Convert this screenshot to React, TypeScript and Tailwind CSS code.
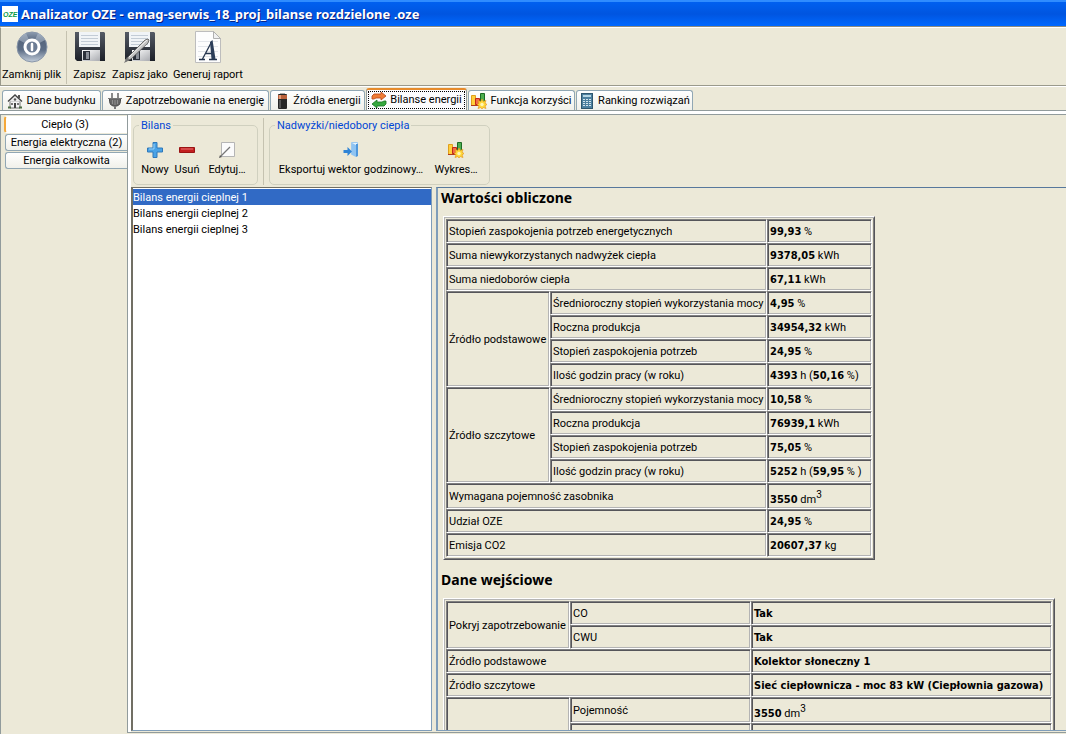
import React from 'react';
import clsx from 'clsx';

const CloseIcon = () => (
  <svg width="32" height="32" viewBox="0 0 32 32">
    <defs>
      <linearGradient id="disc" x1="0" y1="0" x2="0" y2="1">
        <stop offset="0" stopColor="#8d9cb0" />
        <stop offset=".3" stopColor="#56667e" />
        <stop offset=".6" stopColor="#5d6e86" />
        <stop offset="1" stopColor="#c3cedb" />
      </linearGradient>
    </defs>
    <circle cx="16" cy="16" r="15" fill="url(#disc)" stroke="#8896a9" />
    <path d="M16 16L3 9a15 15 0 0 1 7-7zM16 16l13-7a15 15 0 0 0-7-7z" fill="#b9c5d4" opacity=".5" />
    <circle cx="16" cy="16" r="7" fill="#6c7c94" stroke="#fff" strokeWidth="3" />
    <path d="M16 13v6" stroke="#fff" strokeWidth="2.500" strokeLinecap="round" />
  </svg>
);

const Floppy = ({ pen = false }: { pen?: boolean }) => (
  <svg width="32" height="32" viewBox="0 0 32 32">
    <defs>
      <linearGradient id="floppy" x1="0" y1="0" x2="0" y2="1">
        <stop offset="0" stopColor="#555b66" />
        <stop offset="1" stopColor="#1b1f27" />
      </linearGradient>
      <linearGradient id="shutter" x1="0" y1="0" x2="1" y2="1">
        <stop offset="0" stopColor="#fff" />
        <stop offset="1" stopColor="#a9abb0" />
      </linearGradient>
    </defs>
    <path d="M1 1h29l1 1v28H3l-2-2z" fill="url(#floppy)" />
    <path d="M5 1h21v15H5z" fill="#f1f4f7" />
    <path d="M7 4.500h17M7 7.500h17M7 10.500h17M7 13.500h17" stroke="#c3ccd6" />
    <path d="M8 19h18v11H8z" fill="url(#shutter)" />
    <path d="M9 20h7v9H9z" fill="#2b303a" />
    <path d="M12 21h3v7h-3z" fill="#8a8f98" />
    {pen && (
      <g>
        <path d="M2 30l2-4L21 9l3-1 1 1-1 3L7 28z" fill="#c4c4c4" stroke="#555" strokeWidth=".8" />
        <path d="M5 26L23 9" stroke="#f2f2f2" />
        <path d="M0 32l3-6 3 3z" fill="#777" />
      </g>
    )}
  </svg>
);

const ReportIcon = () => (
  <svg width="32" height="32" viewBox="0 0 32 32">
    <path d="M3.500.5h18l7 7v24h-25z" fill="#fdfdfd" stroke="#bdbdbd" />
    <path d="M21.500.5v7h7z" fill="#f0f0f0" stroke="#b0b0b0" />
    <path d="M6 10.500h20M6 15.500h20M6 20.500h20M6 25.500h20" stroke="#e3e6ea" />
    <path d="M7 28.500h6M17 28.500h8M10.500 28l9-17M13.500 22.500h8" stroke="#26364f" strokeWidth="1.300" fill="none" />
    <path d="M18 11l2.500-2 3 19h-4z" fill="#2c3e59" />
  </svg>
);

const HouseIcon = () => (
  <svg width="16" height="16" viewBox="0 0 16 16">
    <path d="M3 8h10v7H3z" fill="#f4f4f4" stroke="#555" strokeWidth=".8" />
    <path d="M1 8.500L8 2l7 6.500" fill="#eee" stroke="#444" strokeWidth="1.400" />
    <path d="M11 2h2v3h-2z" fill="#555" />
    <path d="M7 10h2v5H7z" fill="#444" />
    <circle cx="8" cy="6.500" r="1.200" fill="#555" />
    <path d="M4 10h2v2H4zM10 10h2v2h-2z" fill="#777" />
    <path d="M1 13.500h3v2H1zM12 13.500h3v2h-3z" fill="#4b6b43" />
  </svg>
);

const PlugIcon = () => (
  <svg width="16" height="16" viewBox="0 0 16 16">
    <path d="M4 0h2v6H4zM10 0h2v6h-2z" fill="#8a8a8a" />
    <path d="M2.500 5.500h11v3l-1 3-2.500 1.500H6L3.500 11.500l-1-3z" fill="#666" stroke="#4a4a4a" />
    <path d="M1 5.500h14" stroke="#777" />
    <path d="M5.500 7v4M8 7v5M10.500 7v4" stroke="#909090" />
    <path d="M7 13h2v3H7z" fill="#777" />
  </svg>
);

const BatteryIcon = () => (
  <svg width="16" height="16" viewBox="0 0 16 16">
    <path d="M6 0h5v2H6z" fill="#aaa" />
    <rect x="4" y="1" width="9" height="15" rx="1" fill="#262626" />
    <path d="M4 2h9v4H4z" fill="#b9603a" />
    <path d="M6 2v4" stroke="#f0b090" strokeWidth="1.500" />
    <path d="M6 7v8" stroke="#666" strokeWidth="1.500" />
  </svg>
);

const BalanceIcon = () => (
  <svg width="16" height="16" viewBox="0 0 16 16">
    <path d="M1 7V4l2-2h7V0l5 4-5 4V6H5L3 7z" fill="#ef7b35" stroke="#b64415" strokeWidth=".8" />
    <path d="M15 9v3l-2 2H6v2l-5-4 5-4v2h5l2-1z" fill="#35a83f" stroke="#167321" strokeWidth=".8" />
  </svg>
);

const ChartIcon = () => (
  <svg width="16" height="16" viewBox="0 0 16 16">
    <path d="M.5 2.500h4v10h-4z" fill="#ffcf3c" stroke="#e0a01c" />
    <path d="M4.500 5.500h4v6h-4z" fill="#f06a4a" stroke="#c02818" />
    <path d="M9.500.5h4v10h-4z" fill="#4cae50" stroke="#1c6a24" />
    <path d="M0 12.500h8" stroke="#b33a1a" />
    <path d="M11 6l1.200 2.500L15 7.500l-1 2.700 2 1.300-2 1.300 1 2.700-2.800-1L11 16l-1.200-1.500-2.800 1 1-2.700-2-1.300 2-1.300-1-2.700 2.800 1z" fill="#ffd83a" stroke="#e59a1c" strokeWidth=".7" />
    <circle cx="11" cy="11.500" r="1.700" fill="#fff6b8" />
  </svg>
);

const CalculatorIcon = () => (
  <svg width="16" height="16" viewBox="0 0 16 16">
    <rect x="2.500" y=".5" width="11" height="15" fill="#4c7f9f" stroke="#2e566f" />
    <path d="M4 2h8v2H4z" fill="#b5d5e2" />
    <path d="M4 6.500h8M4 8.500h8M4 10.500h8M4 12.500h8" stroke="#d3e4ec" strokeDasharray="2 1" />
  </svg>
);

const PlusIcon = () => (
  <svg width="16" height="16" viewBox="0 0 16 16">
    <path d="M6 .5h4V6h5.500v4H10v5.500H6V10H.5V6H6z" fill="#4aa3e6" stroke="#2f78ba" />
    <path d="M7 2v5H2" stroke="#9ad2f8" fill="none" />
  </svg>
);

const MinusIcon = () => (
  <svg width="16" height="16" viewBox="0 0 16 16">
    <path d="M.5 5.500h15v5H.5z" fill="#c31f1f" stroke="#9a1414" />
    <path d="M2 7h12" stroke="#e87575" />
  </svg>
);

const EditIcon = () => (
  <svg width="16" height="16" viewBox="0 0 16 16">
    <path d="M2.500.5h13v14h-13z" fill="#fbfbfb" stroke="#b5b5b5" />
    <path d="M2 14L11 5" stroke="#777" strokeWidth="1.200" />
    <path d="M0 16l3-1-2-2z" fill="#555" />
  </svg>
);

const ExportIcon = () => (
  <svg width="16" height="16" viewBox="0 0 16 16">
    <path d="M8.500.5h6v12h-6z" fill="#e6f3fd" stroke="#9cc8ee" />
    <path d="M9 1l4 2v12l-4-2z" fill="#8fc4f2" />
    <path d="M13 2h2v12l-2 1z" fill="#4e97dc" />
    <path d="M.5 8h4V5L9 9.500 4.500 14v-3h-4z" fill="#2f84d6" />
  </svg>
);

const mainTabs = [
  { label: 'Dane budynku', icon: <HouseIcon />, width: 'w-[99px]' },
  { label: 'Zapotrzebowanie na energię', icon: <PlugIcon />, width: 'w-[167px]' },
  { label: 'Źródła energii', icon: <BatteryIcon />, width: 'w-[95px]' },
  { label: 'Bilanse energii', icon: <BalanceIcon />, width: 'w-[101px]', active: true },
  { label: 'Funkcja korzyści', icon: <ChartIcon />, width: 'w-[107px]' },
  { label: 'Ranking rozwiązań', icon: <CalculatorIcon />, width: 'w-[117px]' },
];

const sideTabs = ['Ciepło (3)', 'Energia elektryczna (2)', 'Energia całkowita'];
const balances = ['Bilans energii cieplnej 1', 'Bilans energii cieplnej 2', 'Bilans energii cieplnej 3'];

const Strong = ({ children }: { children: React.ReactNode }) => (
  <b className="font-['DejaVu_Sans_Condensed','DejaVu_Sans',sans-serif]">{children}</b>
);

const sourceRows = [
  {
    name: 'Źródło podstawowe',
    rows: [
      ['Średnioroczny stopień wykorzystania mocy', <><Strong>4,95</Strong> %</>],
      ['Roczna produkcja', <><Strong>34954,32</Strong> kWh</>],
      ['Stopień zaspokojenia potrzeb', <><Strong>24,95</Strong> %</>],
      ['Ilość godzin pracy (w roku)', <><Strong>4393</Strong> h (<Strong>50,16</Strong> %)</>],
    ],
  },
  {
    name: 'Źródło szczytowe',
    rows: [
      ['Średnioroczny stopień wykorzystania mocy', <><Strong>10,58</Strong> %</>],
      ['Roczna produkcja', <><Strong>76939,1</Strong> kWh</>],
      ['Stopień zaspokojenia potrzeb', <><Strong>75,05</Strong> %</>],
      ['Ilość godzin pracy (w roku)', <><Strong>5252</Strong> h (<Strong>59,95</Strong> % )</>],
    ],
  },
];

function ToolButton({ icon, label, width }: { icon: React.ReactNode; label: string; width: string }) {
  return (
    <button className={clsx('flex flex-col items-center gap-[5px] whitespace-nowrap', width)}>
      {icon}
      <span>{label}</span>
    </button>
  );
}

function Cell({ children, tall, ...rest }: { children?: React.ReactNode; tall?: boolean; colSpan?: number; rowSpan?: number }) {
  return (
    <td
      {...rest}
      className={clsx(
        'border border-t-[#808080] border-l-[#808080] border-r-white border-b-white px-[2px] pt-[2px] whitespace-nowrap shadow-[inset_1px_1px_#55555a,inset_-1px_-1px_#b4b4b4]',
        tall ? 'h-[26px]' : 'h-6'
      )}
    >
      {children}
    </td>
  );
}

function DataTable({ cols, children }: { cols: string[]; children: React.ReactNode }) {
  return (
    <table className="ml-[2px] border-separate border-spacing-0 border border-t-white border-l-white border-r-[#55555a] border-b-[#55555a] p-[2px] shadow-[inset_1px_1px_#b4b4b4,inset_-1px_-1px_#808080]">
      <colgroup>
        {cols.map((c, i) => (
          <col key={i} className={c} />
        ))}
      </colgroup>
      <tbody>{children}</tbody>
    </table>
  );
}

const Cubic = () => (
  <>
    <Strong>3550</Strong> dm<sup className="top-0 align-super text-[10px] leading-[14px]">3</sup>
  </>
);

export default function App() {
  return (
    <div className="flex h-screen flex-col overflow-hidden bg-[#ece9d8] font-['Roboto','DejaVu_Sans_Condensed',sans-serif] text-[11px] leading-[14px] text-black">
      <header className="flex h-[27px] shrink-0 items-center gap-[3px] border-t-2 border-b border-t-[#2f8cff] border-b-[#8c8c80] bg-linear-to-b from-[#0060f0] via-[#0055e0] to-[#0068ff] pl-[2px]">
        <svg width="16" height="16" viewBox="0 0 16 16">
          <path d="M0 0h16v16H0z" fill="#fff" />
          <text x="1" y="11" fontSize="7" fontWeight="bold" fontStyle="italic" fill="#0a9a4a" fontFamily="Liberation Sans">OZE</text>
        </svg>
        <h1 className="font-['Noto_Sans',sans-serif] text-[13px] font-bold whitespace-nowrap text-white [text-shadow:1px_1px_#0a1f80]">
          Analizator OZE - emag-serwis_18_proj_bilanse rozdzielone .oze
        </h1>
      </header>

      <div className="flex h-[59px] shrink-0 border border-t-white border-r-0 border-b-[#9a9a8c] border-l-[#9a9a8c] px-[2px] pt-[3px]">
        <ToolButton icon={<CloseIcon />} label="Zamknij plik" width="w-[57px]" />
        <div className="ml-[6px] h-[53px] w-px bg-[#c5c2b0]" />
        <ToolButton icon={<Floppy />} label="Zapisz" width="w-[45px]" />
        <ToolButton icon={<Floppy pen />} label="Zapisz jako" width="w-[56px]" />
        <ToolButton icon={<ReportIcon />} label="Generuj raport" width="w-[80px]" />
      </div>

      <nav className="flex h-6 shrink-0 items-end gap-px border-t border-white pl-[2px]">
        {mainTabs.map((t) => (
          <button
            key={t.label}
            className={clsx(
              'flex items-center justify-center gap-[3px] rounded-t-[3px] border border-b-0 whitespace-nowrap',
              t.width,
              t.active
                ? 'h-[22px] border-[#919b9c] border-t-2 border-t-[#e68b2c] bg-[#fcfcfe] px-px pb-px'
                : 'h-5 border-[#91a7b4] bg-linear-to-b from-white to-[#f0f0ea] pt-px'
            )}
          >
            {t.active ? (
              <span className="flex h-[18px] flex-1 items-center justify-center gap-[3px] border border-dotted border-black">
                {t.icon}
                {t.label}
              </span>
            ) : (
              <>
                {t.icon}
                {t.label}
              </>
            )}
          </button>
        ))}
      </nav>

      <div className="h-[5px] shrink-0 border-y border-[#919b9c] bg-white" />

      <main className="flex min-h-0 flex-1 border-l border-[#919b9c]">
        <nav className="flex w-[126px] shrink-0 flex-col gap-px pl-[3px]">
          {sideTabs.map((t, i) => (
            <button
              key={t}
              className={clsx(
                'h-[17px] rounded-l-[3px] border pt-px leading-[14px] whitespace-nowrap',
                i === 0 ? 'mt-px border-white border-l-2 border-l-[#f5a83a] bg-white pr-[2px]' : 'ml-px border-r-0 border-[#91a7b4] bg-linear-to-b from-white to-[#f0f0ea]'
              )}
            >
              {t}
            </button>
          ))}
        </nav>

        <section className="mb-px flex min-w-0 flex-1 flex-col border-b border-l border-[#919b9c]">
          <div className="flex h-[72px] shrink-0 border-l-3 border-white pt-[3px] pl-[2px]">
            <fieldset className="flex h-[67px] w-[125px] rounded-[5px] border border-[#d0d0bf] pt-[9px] pl-1">
              <legend className="ml-px px-[2px] pt-px text-[#0046d5]">Bilans</legend>
              <ToolButton icon={<PlusIcon />} label="Nowy" width="w-[34px]" />
              <ToolButton icon={<MinusIcon />} label="Usuń" width="w-[30px]" />
              <ToolButton icon={<EditIcon />} label="Edytuj…" width="w-[50px]" />
            </fieldset>
            <div className="mx-[5px] h-[67px] w-px bg-[#c5c2b0]" />
            <fieldset className="flex h-[67px] w-[221px] rounded-[5px] border border-[#d0d0bf] pt-[9px] pl-1">
              <legend className="ml-px px-[2px] pt-px text-[#0046d5]">Nadwyżki/niedobory ciepła</legend>
              <ToolButton icon={<ExportIcon />} label="Eksportuj wektor godzinowy…" width="w-[154px]" />
              <ToolButton icon={<ChartIcon />} label="Wykres…" width="w-[56px]" />
            </fieldset>
          </div>

          <div className="flex min-h-0 flex-1 border-l-3 border-white pb-px">
            <ul className="w-[301px] shrink-0 border border-l-2 border-[#7f9db9] border-t-[#716f64] border-l-[#716f64] bg-white pt-px">
              {balances.map((b, i) => (
                <li key={b} className={clsx('h-4 pt-[2px]', i === 0 && 'bg-[#316ac5] text-white')}>
                  {b}
                </li>
              ))}
            </ul>
            <article className="ml-1 min-w-0 flex-1 overflow-hidden border border-r-0 border-l-2 border-[#7f9db9] border-t-[#57789c] pl-[3px]">
              <h2 className="mt-px mb-[10px] font-['Noto_Sans',sans-serif] text-[14px] leading-[17px] font-bold">Wartości obliczone</h2>
              <DataTable cols={['w-[104px]', 'w-[217px]', 'w-[105px]']}>
                <tr>
                  <Cell colSpan={2}>Stopień zaspokojenia potrzeb energetycznych</Cell>
                  <Cell><Strong>99,93</Strong> %</Cell>
                </tr>
                <tr>
                  <Cell colSpan={2}>Suma niewykorzystanych nadwyżek ciepła</Cell>
                  <Cell><Strong>9378,05</Strong> kWh</Cell>
                </tr>
                <tr>
                  <Cell colSpan={2}>Suma niedoborów ciepła</Cell>
                  <Cell><Strong>67,11</Strong> kWh</Cell>
                </tr>
                {sourceRows.map((s) =>
                  s.rows.map(([label, value], i) => (
                    <tr key={`${s.name}-${i}`}>
                      {i === 0 && <Cell rowSpan={4}>{s.name}</Cell>}
                      <Cell>{label}</Cell>
                      <Cell>{value}</Cell>
                    </tr>
                  ))
                )}
                <tr>
                  <Cell tall colSpan={2}>Wymagana pojemność zasobnika</Cell>
                  <Cell tall><Cubic /></Cell>
                </tr>
                <tr>
                  <Cell colSpan={2}>Udział OZE</Cell>
                  <Cell><Strong>24,95</Strong> %</Cell>
                </tr>
                <tr>
                  <Cell colSpan={2}>Emisja CO2</Cell>
                  <Cell><Strong>20607,37</Strong> kg</Cell>
                </tr>
              </DataTable>

              <h2 className="mt-[11px] mb-[10px] font-['Noto_Sans',sans-serif] text-[14px] leading-[17px] font-bold">Dane wejściowe</h2>
              <DataTable cols={['w-[124px]', 'w-[181px]', 'w-[301px]']}>
                <tr>
                  <Cell rowSpan={2}>Pokryj zapotrzebowanie</Cell>
                  <Cell>CO</Cell>
                  <Cell><Strong>Tak</Strong></Cell>
                </tr>
                <tr>
                  <Cell>CWU</Cell>
                  <Cell><Strong>Tak</Strong></Cell>
                </tr>
                <tr>
                  <Cell colSpan={2}>Źródło podstawowe</Cell>
                  <Cell><Strong>Kolektor słoneczny 1</Strong></Cell>
                </tr>
                <tr>
                  <Cell colSpan={2}>Źródło szczytowe</Cell>
                  <Cell><Strong>Sieć ciepłownicza - moc 83 kW (Ciepłownia gazowa)</Strong></Cell>
                </tr>
                <tr>
                  <Cell rowSpan={2} />
                  <Cell tall>Pojemność</Cell>
                  <Cell tall><Cubic /></Cell>
                </tr>
                <tr>
                  <Cell />
                  <Cell />
                </tr>
              </DataTable>
            </article>
          </div>
        </section>
      </main>
    </div>
  );
}
